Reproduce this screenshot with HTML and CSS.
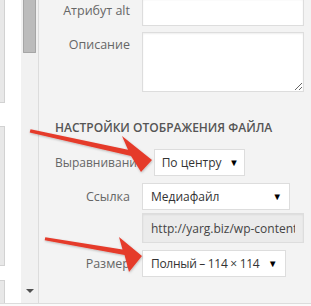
FILE: index.html
```html
<!DOCTYPE html>
<html lang="ru">

<head>
	<meta charset="UTF-8">
	<meta name="viewport" content="width=device-width, initial-scale=1.0">
	<title>Attachment display settings</title>
	<link rel="stylesheet" href="styles.css">
</head>

<body>

	<div class="frame">
		<div class="library">
			<div class="thumb thumb-a"></div>
			<div class="thumb thumb-b"></div>
			<div class="thumb thumb-c"></div>
		</div>

		<div class="scrollbar">
			<div class="scroll-thumb"></div>
			<div class="scroll-down"></div>
		</div>

		<div class="sidebar">
			<label class="setting setting-alt">
				<span class="name">Атрибут alt</span>
				<input class="field" type="text">
			</label>
			<label class="setting setting-top">
				<span class="name">Описание</span>
				<textarea class="field area"></textarea>
			</label>

			<h3>Настройки отображения файла</h3>

			<div class="setting setting-align">
				<span class="name">Выравнивание</span>
				<div class="select select-align">
					<span>По центру</span>
					<span class="caret">▼</span>
				</div>
			</div>
			<div class="setting setting-link">
				<span class="name">Ссылка</span>
				<div class="select select-link">
					<span>Медиафайл</span>
					<span class="caret">▼</span>
				</div>
			</div>
			<div class="setting setting-url">
				<span class="name"></span>
				<input class="field url" type="text" value="http://yarg.biz/wp-content/uploads/2015/03/image.png" readonly>
			</div>
			<div class="setting setting-size">
				<span class="name">Размер</span>
				<div class="select select-size">
					<span>Полный – 114 × 114</span>
					<span class="caret">▼</span>
				</div>
			</div>
		</div>
	</div>

	<!-- red arrows drawn over the screenshot -->
	<svg class="arrows" width="311" height="306" viewBox="0 0 311 306">
		<defs>
			<filter id="shadow" x="-10%" y="-30%" width="120%" height="160%">
				<feDropShadow dx="0.5" dy="1" stdDeviation="0.8" flood-color="#000" flood-opacity="0.25" />
			</filter>
		</defs>
		<g fill="#e53b2c" filter="url(#shadow)">
			<polygon points="30.5,129.3 128,149.8 122,136 152,160 141,172 131,156 29.7,132.5" />
			<polygon points="45.3,237.3 122.5,249.5 119,237 142,256 129,272 124.5,255 44.7,240.3" />
		</g>
	</svg>

</body>

</html>
```

FILE: styles.css
```css
body {
	margin: 0;
	width: 311px;
	height: 306px;
	overflow: hidden;
	position: relative;
	font-family: 'Open Sans', sans-serif;
	font-size: 12px;
	color: #333;
	background-color: #fafafa;
}

.frame {
	display: flex;
	height: 303px;
	border-bottom: 1px solid #dcdcdc;
}

/* attachments browser, cut at the left edge */
.library {
	flex: none;
	width: 21px;
	background-color: #fff;
	display: flex;
	flex-direction: column;
}

.thumb {
	width: 4px;
	background-color: #e8e8e8;
	border: 1px solid #d2d2d2;
	border-left: none;
}

.thumb-a {
	height: 102px;
	border-top: none;
}

.thumb-b {
	margin-top: 23px;
	height: 138px;
}

.thumb-c {
	margin-top: 14px;
	flex: 1;
	border-bottom: none;
}

.scrollbar {
	flex: none;
	width: 17px;
	background-color: #f1f1f1;
	border-right: 1px solid #dcdcdc;
	display: flex;
	flex-direction: column;
	align-items: center;
}

.scroll-thumb {
	width: 11px;
	height: 52px;
	background-color: #bcbcbc;
	border: 1px solid #a6a6a6;
	border-top: none;
	border-radius: 0 0 1px 1px;
}

.scroll-down {
	margin-top: auto;
	margin-bottom: 10px;
	width: 0;
	height: 0;
	border-left: 4px solid transparent;
	border-right: 4px solid transparent;
	border-top: 4px solid #505050;
}

/* attachment details sidebar */
.sidebar {
	flex: 1;
	min-width: 0;
	background-color: #f3f3f3;
	padding: 0 7px 0 16px;
}

.setting {
	display: flex;
	align-items: center;
	gap: 12px;
}

.setting .name {
	flex: none;
	min-width: 75px;
	text-align: right;
	font-size: 12.5px;
	color: #666;
	white-space: nowrap;
}

.setting-align {
	gap: 10px;
}

.setting-align .name {
	font-size: 12px;
}

.setting-alt {
	margin-top: -2px;
	align-items: flex-start;
}

.setting-alt .name {
	padding-top: 4px;
}

.setting-top {
	margin-top: 6px;
	align-items: flex-start;
}

.setting-top .name {
	padding-top: 4px;
}

.field {
	flex: 1;
	min-width: 0;
	height: 28px;
	box-sizing: border-box;
	border: 1px solid #ddd;
	background-color: #fff;
	box-shadow: inset 0 1px 2px rgba(0, 0, 0, 0.07);
	font: inherit;
	color: #333;
	padding: 3px 8px;
	margin: 0;
	outline: none;
}

.area {
	height: 60px;
	resize: both;
}

.url {
	height: 30px;
	background-color: #ebebeb;
	color: #444;
}

h3 {
	margin: 28px 0 13px;
	font-size: 12px;
	line-height: 16px;
	font-weight: 600;
	text-transform: uppercase;
	color: #555;
	white-space: nowrap;
}

.select {
	flex: none;
	height: 27px;
	box-sizing: border-box;
	border: 1px solid #ddd;
	background-color: #fff;
	display: flex;
	align-items: center;
	justify-content: space-between;
	padding: 0 7px 0 8px;
	color: #333;
	white-space: nowrap;
}

.caret {
	font-size: 9.5px;
	color: #000;
}

.select-align {
	width: 91px;
	padding-left: 7px;
	padding-right: 5px;
}

.select-link {
	width: 148px;
}

.select-size {
	width: 144px;
	padding-right: 8px;
	letter-spacing: -0.3px;
}

.setting-link {
	margin-top: 7px;
}

.setting-url {
	margin-top: 3px;
}

.setting-size {
	margin-top: 7px;
}

.arrows {
	position: absolute;
	left: 0;
	top: 0;
	pointer-events: none;
}
```
